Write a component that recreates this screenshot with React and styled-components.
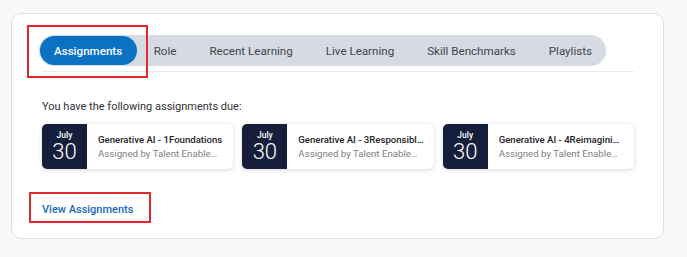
import React from "react";
import styled, { createGlobalStyle } from "styled-components";

const GlobalStyle = createGlobalStyle`
  html, body {
    margin: 0;
    padding: 0;
    background: #f8f9fb;
    font-family: Roboto, "Liberation Sans", sans-serif;
  }
`;

const Page = styled.div`
  padding: 13px 23px 18px 11px;
`;

const Panel = styled.div`
  background: #ffffff;
  border: 1px solid #dcdee3;
  border-radius: 10px;
  padding: 21px 29px 14px 27px;
  height: 226px;
  box-sizing: border-box;
`;

const TabArea = styled.div`
  position: relative;
`;

const TabBar = styled.div`
  display: inline-flex;
  align-items: center;
  background: #d6dae2;
  border-radius: 16px;
  height: 31px;
  padding: 0 0 0 1px;
`;

const Tab = styled.div`
  height: 29px;
  display: flex;
  align-items: center;
  padding: 0 16.5px;
  border-radius: 15px;
  font-size: 11.6px;
  font-weight: 400;
  color: #41454d;
  background: transparent;
  white-space: nowrap;

  &:first-child {
    padding: 0 15px 0 14px;
    font-weight: 500;
    color: #ffffff;
    background: #0a71c4;
  }

  &:last-child {
    padding-right: 14px;
  }
`;

const Marker = styled.div`
  position: absolute;
  border: 2px solid #e3262b;
  box-sizing: border-box;
  pointer-events: none;
`;

const Divider = styled.div`
  height: 1px;
  background: #e8eaee;
  margin: 5px 0 0 3px;
`;

const Intro = styled.div`
  margin: 28px 0 0 3px;
  font-size: 11px;
  color: #2f3237;
`;

const CardRow = styled.div`
  display: flex;
  gap: 9px;
  margin: 11px 0 0 3px;
`;

const Card = styled.div`
  flex: 1;
  display: flex;
  height: 45px;
  background: #fff;
  border-radius: 5px;
  overflow: hidden;
  box-shadow: 0 1px 4px rgba(0, 0, 0, 0.16);
  min-width: 0;
`;

const DateBlock = styled.div`
  width: 45px;
  flex-shrink: 0;
  background: #151e3a;
  color: #fff;
  display: flex;
  flex-direction: column;
  align-items: center;
  justify-content: center;
`;

const Month = styled.span`
  font-size: 8.5px;
  font-weight: 500;
  line-height: 10px;
`;

const Day = styled.span`
  font-size: 22px;
  line-height: 23px;
  font-weight: 300;
`;

const CardBody = styled.div`
  flex: 1;
  min-width: 0;
  padding: 0 10px 0 11px;
  display: flex;
  flex-direction: column;
  justify-content: center;
  gap: 3px;
`;

const Title = styled.div`
  font-size: 9.6px;
  font-weight: 500;
  color: #1e2126;
  white-space: nowrap;
  overflow: hidden;
  text-overflow: ellipsis;
`;

const Sub = styled.div`
  font-size: 9.7px;
  color: #7b7f86;
  white-space: nowrap;
  overflow: hidden;
  text-overflow: ellipsis;
`;

const LinkArea = styled.div`
  position: relative;
  margin: 34px 0 0 3px;
  font-size: 11px;
`;

const ViewLink = styled.a`
  display: inline-block;
  font-size: 11px;
  font-weight: 500;
  color: #1768c2;
  text-decoration: none;
  cursor: pointer;
`;

const tabs = [
  "Assignments",
  "Role",
  "Recent Learning",
  "Live Learning",
  "Skill Benchmarks",
  "Playlists",
];

const assignments = [
  { title: "Generative AI - 1Foundations" },
  { title: "Generative AI - 3Responsible AI" },
  { title: "Generative AI - 4Reimagining Work" },
];

const App = () => {
  return (
    <Page>
      <GlobalStyle />
      <Panel>
        <TabArea>
          <TabBar>
            {tabs.map((t) => (
              <Tab key={t}>{t}</Tab>
            ))}
          </TabBar>
          <Marker style={{ left: -12, top: -10, width: 121, height: 53 }} />
          <Divider />
        </TabArea>
        <Intro>You have the following assignments due:</Intro>
        <CardRow>
          {assignments.map((a) => (
            <Card key={a.title}>
              <DateBlock>
                <Month>July</Month>
                <Day>30</Day>
              </DateBlock>
              <CardBody>
                <Title>{a.title}</Title>
                <Sub>Assigned by Talent Enablement</Sub>
              </CardBody>
            </Card>
          ))}
        </CardRow>
        <LinkArea>
          <ViewLink>View Assignments</ViewLink>
          <Marker style={{ left: -13, top: -11, width: 122, height: 31 }} />
        </LinkArea>
      </Panel>
    </Page>
  );
};

export default App;
